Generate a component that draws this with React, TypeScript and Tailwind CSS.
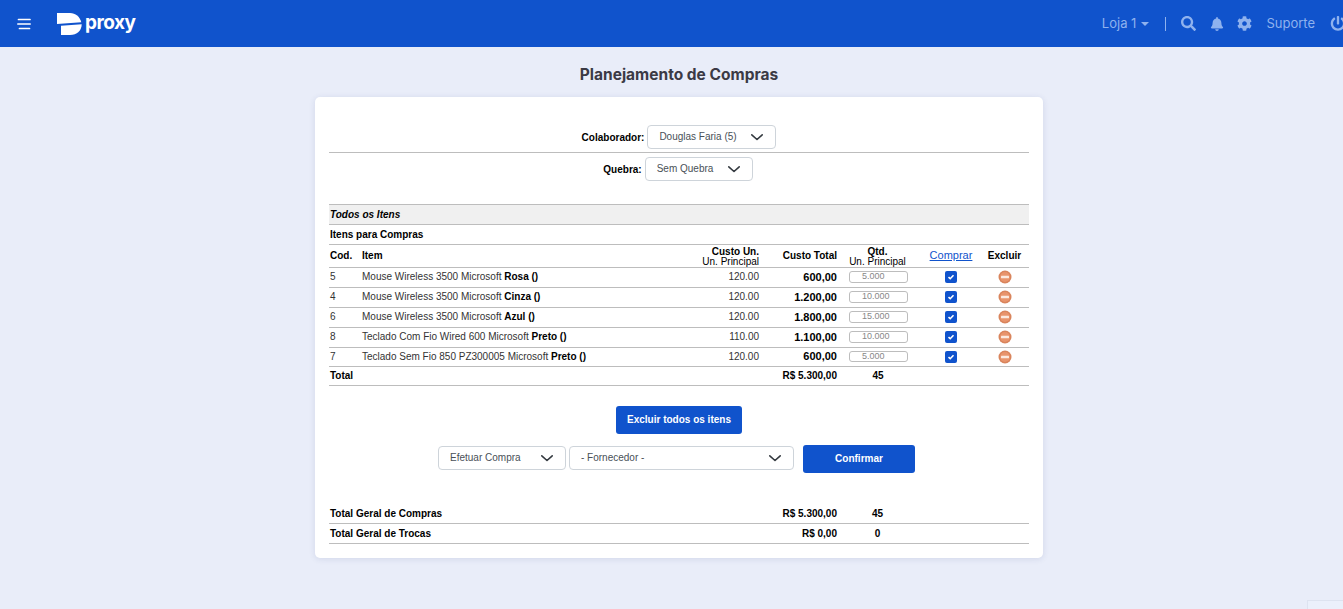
import { FaBell, FaCog, FaPowerOff, FaSearch } from "react-icons/fa";

type Row = {
  cod: string;
  name: string;
  variant: string;
  unit: string;
  total: string;
  qty: string;
};

const rows: Row[] = [
  { cod: "5", name: "Mouse Wireless 3500 Microsoft", variant: "Rosa ()", unit: "120.00", total: "600,00", qty: "5.000" },
  { cod: "4", name: "Mouse Wireless 3500 Microsoft", variant: "Cinza ()", unit: "120.00", total: "1.200,00", qty: "10.000" },
  { cod: "6", name: "Mouse Wireless 3500 Microsoft", variant: "Azul ()", unit: "120.00", total: "1.800,00", qty: "15.000" },
  { cod: "8", name: "Teclado Com Fio Wired 600 Microsoft", variant: "Preto ()", unit: "110.00", total: "1.100,00", qty: "10.000" },
];

const lastRow: Row = { cod: "7", name: "Teclado Sem Fio 850 PZ300005 Microsoft", variant: "Preto ()", unit: "120.00", total: "600,00", qty: "5.000" };

function Logo() {
  return (
    <svg width="25" height="22" viewBox="0 0 25 22" className="shrink-0">
      <path d="M0 0H13C18.500 0 22.800 3.500 24.300 9.300L0 11Z" fill="#fff" />
      <path d="M4 12.800L24.700 11.200C24.700 17.500 20 22 13 22H4Z" fill="#fff" />
    </svg>
  );
}

function Hamburger() {
  return (
    <svg width="14" height="12" viewBox="0 0 14 12" fill="none" stroke="#fff" strokeWidth="1.700" strokeLinecap="round">
      <path d="M1.500 1.500H13" />
      <path d="M0.800 6H13.200" />
      <path d="M2.500 10.500H12.500" />
    </svg>
  );
}

function Select({ label, className }: { label: string; className: string }) {
  return (
    <div
      className={`flex h-6 items-center justify-between rounded-[4px] border border-[#ced4da] bg-white pr-[11px] pl-[11px] text-[10px] text-[#495057] ${className}`}
    >
      <span className="pb-px">{label}</span>
      <svg width="16" height="16" viewBox="0 0 16 16" fill="none" stroke="#343a40" strokeWidth="1.600" strokeLinecap="round" strokeLinejoin="round">
        <path d="M3.800 5.800L9 10.500L14.200 5.800" />
      </svg>
    </div>
  );
}

function Check() {
  return (
    <span className="mx-auto flex h-3 w-3 items-center justify-center rounded-[2px] bg-[#1053cc]">
      <svg width="8" height="8" viewBox="0 0 8 8" fill="none" stroke="#fff" strokeWidth="1.600">
        <path d="M1.500 4.200L3.200 5.700L6.500 2.300" />
      </svg>
    </span>
  );
}

function RemoveIcon() {
  return (
    <svg width="14" height="14" viewBox="0 0 14 14" className="mx-auto block">
      <circle cx="7" cy="7" r="6.500" fill="#d9845c" />
      <circle cx="7" cy="7" r="5" fill="#e8946c" />
      <rect x="3" y="5.800" width="8" height="2.400" rx="0.500" fill="#fbe9df" />
    </svg>
  );
}

function ItemRow({ row, last }: { row: Row; last?: boolean }) {
  return (
    <tr className={last ? "h-[19px] border-b border-[#bdbdbd] text-[#333]" : "h-5 border-b border-[#bdbdbd] text-[#333]"}>
      <td className={last ? "pl-px" : "pb-[2px] pl-px"}>{row.cod}</td>
      <td className={last ? "" : "pb-[2px]"}>
        {row.name} <b className="text-black">{row.variant}</b>
      </td>
      <td className={last ? "pr-px text-right" : "pr-px pb-[2px] text-right"}>{row.unit}</td>
      <td className="pr-px pb-[2px] text-right text-[11px] font-bold text-black">{row.total}</td>
      <td className="pb-px">
        <div className="ml-[11px] h-[11.500px] w-[59px] rounded-[3px] border border-[#bdbdbd] pl-3 text-left text-[9px] leading-[9px] text-[#888]">
          {row.qty}
        </div>
      </td>
      <td className="pb-px">
        <Check />
      </td>
      <td className="pr-1 pb-px">
        <RemoveIcon />
      </td>
    </tr>
  );
}

export default function App() {
  return (
    <div className="min-h-[609px] overflow-hidden bg-[#e9edf9] font-['Liberation_Sans',Arial,sans-serif] text-[10px] text-black">
      <header className="flex h-[47px] items-center overflow-hidden bg-[#1053cc] pl-[17px]">
        <Hamburger />
        <div className="ml-[26px] flex items-center">
          <Logo />
          <span className="ml-[3px] font-['Inter',sans-serif] text-[19px] font-bold tracking-[-0.5px] text-white">proxy</span>
        </div>
        <div className="mr-[-4px] ml-auto flex items-center font-['Inter',sans-serif] text-[13px] text-[#8fb2ee]">
          <span>Loja 1</span>
          <span className="ml-[5px] h-0 w-0 border-x-[4px] border-t-[4px] border-x-transparent border-t-[#8fb2ee]" />
          <span className="ml-[16px] h-[14px] w-px bg-[#8fb2ee]" />
          <FaSearch size={15} className="ml-[15px]" />
          <FaBell size={14} className="ml-[14px]" />
          <FaCog size={15} className="ml-[13px]" />
          <span className="ml-[14px]">Suporte</span>
          <FaPowerOff size={15} className="ml-[14px] w-[18px]" />
        </div>
      </header>

      <div className="pl-[15px]">
        <h1 className="mt-[18px] text-center font-['Inter',sans-serif] text-[15.500px] leading-5 font-bold text-[#3b3a45]">
          Planejamento de Compras
        </h1>

        <main className="mx-auto mt-3 h-[461px] w-[728px] rounded-[5px] bg-white px-[14px] pt-7 shadow-[0_1px_6px_rgba(40,60,120,0.12)]">
          <div className="flex h-[28px] items-start justify-center border-b border-[#bdbdbd]">
            <span className="mt-[5px] font-bold">Colaborador:</span>
            <Select label="Douglas Faria (5)" className="ml-[3px] w-[129px]" />
          </div>
          <div className="mt-1 flex justify-center pr-[2px]">
            <span className="mt-[5px] mr-[3px] font-bold">Quebra:</span>
            <Select label="Sem Quebra" className="w-[108px]" />
          </div>

          <div className="mt-[23px] flex h-[21px] items-center border-y border-[#bdbdbd] bg-[#f0f0f0] pl-px font-bold italic">
            Todos os Itens
          </div>
          <div className="flex h-[19px] items-center pl-px font-bold">Itens para Compras</div>

          <table className="w-[700px] table-fixed border-t border-[#bdbdbd]">
            <colgroup>
              <col className="w-[33px]" />
              <col className="w-[329px]" />
              <col className="w-[69px]" />
              <col className="w-[78px]" />
              <col className="w-[80px]" />
              <col className="w-[66px]" />
              <col className="w-[45px]" />
            </colgroup>
            <thead>
              <tr className="h-[23px] border-b border-[#bdbdbd] leading-[10px] font-bold">
                <th className="pl-px text-left">Cod.</th>
                <th className="text-left">Item</th>
                <th className="pt-[2px] pr-px text-right">
                  Custo Un.
                  <br />
                  <span className="font-normal">Un. Principal</span>
                </th>
                <th className="pr-px text-right">Custo Total</th>
                <th className="pt-[2px] pr-px text-center">
                  Qtd.
                  <br />
                  <span className="font-normal">Un. Principal</span>
                </th>
                <th className="pb-px text-center">
                  <a className="text-[11px] font-normal text-[#1053cc] underline">Comprar</a>
                </th>
                <th className="pr-1 text-center">Excluir</th>
              </tr>
            </thead>
            <tbody className="leading-3">
              {rows.map((row) => (
                <ItemRow key={row.cod} row={row} />
              ))}
              <ItemRow row={lastRow} last />
              <tr className="h-[19px] border-b border-[#bdbdbd] font-bold">
                <td colSpan={2} className="pb-px pl-px">
                  Total
                </td>
                <td />
                <td className="pr-px pb-px text-right">R$ 5.300,00</td>
                <td className="pb-px text-center">45</td>
                <td colSpan={2} />
              </tr>
            </tbody>
          </table>

          <div className="mt-5 flex justify-center">
            <button className="h-7 w-[126px] rounded-[3px] bg-[#1053cc] pb-px font-bold text-white">
              Excluir todos os itens
            </button>
          </div>

          <div className="mt-[11px] flex items-start pl-[109px]">
            <Select label="Efetuar Compra" className="mt-px w-[128px]" />
            <Select label="- Fornecedor -" className="mt-px ml-[3px] w-[225px]" />
            <button className="ml-[9px] h-7 w-[112px] rounded-[3px] bg-[#1053cc] pb-px font-bold text-white">
              Confirmar
            </button>
          </div>

          <table className="mt-[30px] w-[700px] table-fixed leading-3 font-bold">
            <colgroup>
              <col className="w-[429px]" />
              <col className="w-[80px]" />
              <col className="w-[79px]" />
              <col className="w-[112px]" />
            </colgroup>
            <tbody>
              <tr className="h-[20px] border-b border-[#bdbdbd]">
                <td className="pt-[2px] pl-px">Total Geral de Compras</td>
                <td className="pt-[2px] pr-px text-right">R$ 5.300,00</td>
                <td className="pt-[2px] text-center">45</td>
                <td />
              </tr>
              <tr className="h-[20px] border-b border-[#bdbdbd]">
                <td className="pt-[2px] pl-px">Total Geral de Trocas</td>
                <td className="pt-[2px] pr-px text-right">R$ 0,00</td>
                <td className="pt-[2px] text-center">0</td>
                <td />
              </tr>
            </tbody>
          </table>
        </main>
      </div>

      <div className="fixed right-0 bottom-0 h-[9px] w-[36px] border-t border-l border-[#dde3f0] bg-[#ebf0fb]" />
    </div>
  );
}
